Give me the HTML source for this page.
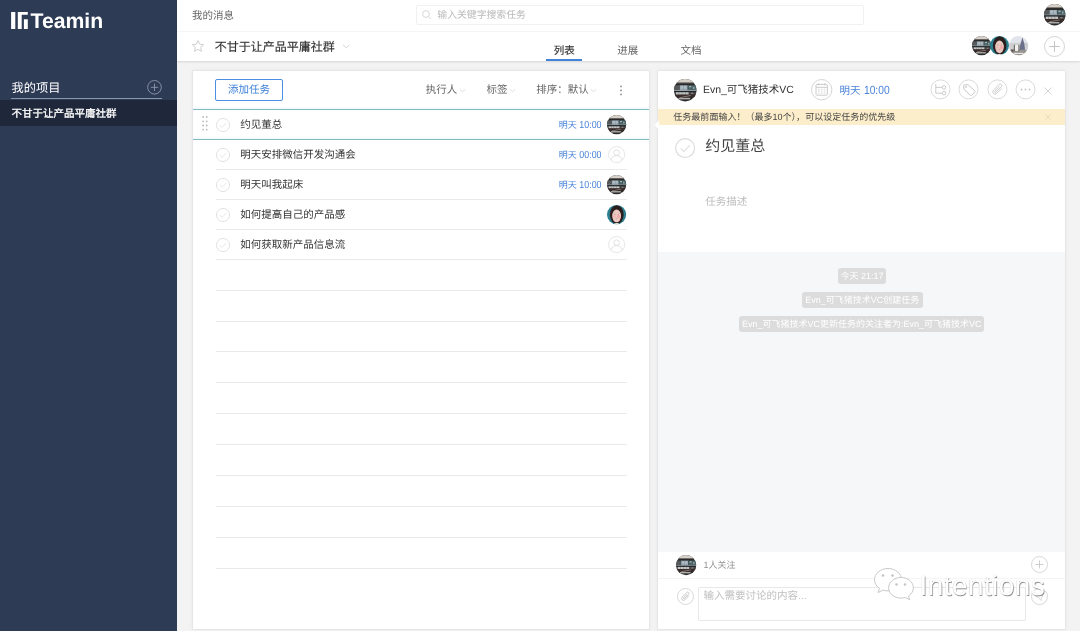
<!DOCTYPE html>
<html lang="zh-CN">
<head>
<meta charset="utf-8">
<title>Teamin</title>
<style>
*{box-sizing:border-box;margin:0;padding:0}
html,body{width:1080px;height:631px;overflow:hidden;background:#f3f3f4}
body{position:relative;will-change:transform;text-rendering:geometricPrecision;font-family:"Liberation Sans",sans-serif;color:#333;font-size:10.5px}
.a{position:absolute}
.t{position:absolute;white-space:nowrap;line-height:16px;height:16px}
svg{position:absolute;overflow:visible}
/* sidebar */
#side{left:0;top:0;width:177px;height:631px;background:#2e3b55}
#logo{left:30.6px;top:10.1px;font-size:21.2px;font-weight:bold;color:#fff;line-height:24px;height:24px;letter-spacing:0}
#proj{left:11.6px;top:80px;font-size:12.2px;color:#fff;font-weight:500}
#projline{left:11px;top:98px;width:151px;height:1px;background:#8a94aa}
#sel{left:0;top:99.5px;width:177px;height:26.5px;background:#1f283a}
#selt{left:11.5px;top:105.5px;font-size:10.5px;color:#fff;font-weight:500;-webkit-text-stroke:0.3px #fff}
/* header */
#hdr{left:177px;top:0;width:903px;height:60.5px;background:#fff;box-shadow:0 1px 2px rgba(0,0,0,.12)}
#hline{left:177px;top:31px;width:903px;height:1px;background:#f5f5f5}
#msg{left:192px;top:7.5px;color:#666}
#search{left:415.5px;top:5px;width:448px;height:20px;border:1px solid #f1f1f1;border-radius:2px;background:#fff}
#ph{left:437.3px;top:7.9px;font-size:9.85px;color:#b9b9b9}
#title{left:214.8px;top:38.5px;font-size:12px;color:#333;-webkit-text-stroke:0.15px #333}
.tab{top:42.5px;color:#666}
#tabline{left:546px;top:59.4px;width:36.2px;height:1.8px;background:#3f82da}
/* panels */
.panel{background:#fff;box-shadow:0 0 0 1px rgba(0,0,0,.028),0 0 4px 1px rgba(0,0,0,.045)}
#list{left:192.5px;top:70.5px;width:456px;height:558.5px}
#detail{left:658px;top:70.5px;width:407px;height:558.5px}
#addbtn{left:215px;top:79px;width:68px;height:22px;border:1px solid #4a8fe0;border-radius:2px;color:#3b7fd9;text-align:center;line-height:20px}
.flt{top:82px;color:#666}
.teal{left:192.5px;width:456px;height:1px;background:#84bbc2;box-shadow:0 -1px 2px rgba(120,210,230,.22)}
.rl{left:216px;width:410.5px;height:1px;background:#e9e9e9}
.task{left:240.3px;color:#333;margin-top:0.6px}
.due{font-size:9px;color:#4782d8;text-align:right;width:60px;left:541.4px;margin-top:0.5px}
.due span{display:inline-block;font-size:10.2px;transform:scaleX(.87);transform-origin:100% 50%;margin-left:-3.3px}
#banner{left:658px;top:109px;width:407px;height:15.5px;background:#fdeecb}
#bt{left:673.3px;top:108.7px;font-size:9px;color:#444;letter-spacing:0.02px}
#act{left:658px;top:252px;width:407px;height:300px;background:#f6f7f9}
.chip{background:#dcdcdc;color:#fff;font-size:9px;border-radius:3px;height:16px;line-height:16px;text-align:center;white-space:nowrap}
</style>
</head>
<body>
<!-- ===== sidebar ===== -->
<div id="side" class="a"></div>
<svg class="a" style="left:0;top:0" width="40" height="40"><path fill="#fff" d="M11.1 11.9h4.2v17h-4.2zM17.8 11.9h10v2.9h-6.1v14.1h-3.9zM23.9 19.2h3.9v9.7h-3.9z"/></svg>
<div id="logo" class="t">Teamin</div>
<div id="proj" class="t">我的项目</div>
<svg class="a" style="left:146px;top:79px" width="17" height="17"><circle cx="8.5" cy="8.3" r="6.8" fill="none" stroke="#8f99ae" stroke-width="0.9"/><path d="M8.5 4.6v7.4M4.8 8.3h7.4" stroke="#8f99ae" stroke-width="0.9" fill="none"/></svg>
<div id="projline" class="a"></div>
<div id="sel" class="a"></div>
<div id="selt" class="t">不甘于让产品平庸社群</div>

<!-- ===== header ===== -->
<div id="hdr" class="a"></div>
<div id="hline" class="a"></div>
<div id="msg" class="t">我的消息</div>
<div id="search" class="a"></div>
<svg class="a" style="left:420px;top:8px" width="14" height="14"><circle cx="6" cy="6" r="3.4" fill="none" stroke="#d2d2d2" stroke-width="0.9"/><path d="M8.5 8.6l2.3 2.4" stroke="#d2d2d2" stroke-width="0.9"/></svg>
<div id="ph" class="t">输入关键字搜索任务</div>

<svg class="a" style="left:191px;top:39px" width="15" height="15"><path d="M7 1.6l1.7 3.6 3.9.5-2.9 2.7.8 3.9L7 10.4l-3.5 1.9.8-3.9L1.4 5.7l3.9-.5z" fill="none" stroke="#c9c9c9" stroke-width="0.9" stroke-linejoin="round"/></svg>
<div id="title" class="t">不甘于让产品平庸社群</div>
<svg class="a" style="left:342px;top:43px" width="9" height="7"><path d="M1 1.8l3.2 3 3.2-3" fill="none" stroke="#cfcfcf" stroke-width="0.9"/></svg>
<div class="t tab" style="left:553.8px;color:#333;-webkit-text-stroke:0.15px #333">列表</div>
<div class="t tab" style="left:617.3px">进展</div>
<div class="t tab" style="left:680.4px">文档</div>
<div id="tabline" class="a"></div>

<!-- ===== panels ===== -->
<div id="list" class="a panel"></div>
<div id="detail" class="a panel"></div>

<svg class="a" width="0" height="0" style="left:0;top:0"><defs>
<clipPath id="cc"><circle cx="50" cy="50" r="50"/></clipPath>
<symbol id="av1" viewBox="0 0 100 100"><g clip-path="url(#cc)"><g>
<rect x="-40" y="-40" width="180" height="180" fill="#2a2a2b"/>
<rect x="-40" y="-40" width="180" height="56" fill="#d6d0c9"/>
<rect x="-40" y="16" width="180" height="3" fill="#8d8782"/>
<rect x="-10" y="28" width="34" height="23" fill="#55595a"/>
<rect x="24" y="28" width="38" height="23" fill="#98a8b2"/>
<rect x="30" y="31" width="26" height="12" fill="#aebbc3"/>
<rect x="62" y="28" width="48" height="23" fill="#4f686b"/>
<rect x="68" y="31" width="10" height="6" fill="#a9b7b7"/><rect x="84" y="35" width="7" height="10" fill="#8fa3a3"/>
<rect x="23" y="28" width="2.500" height="23" fill="#3d4a50"/><rect x="43" y="28" width="1.500" height="23" fill="#6f7f88"/><rect x="61" y="28" width="2.500" height="23" fill="#34444a"/><rect x="79" y="28" width="2" height="23" fill="#3a4d50"/>
<rect x="-10" y="50" width="120" height="3.500" fill="#b4b4b0"/>
<rect x="-10" y="53.500" width="120" height="5" fill="#182630"/>
<rect x="8" y="59" width="58" height="11" fill="#c6c6c4"/>
<rect x="21" y="59" width="2" height="11" fill="#6a6a6a"/><rect x="35" y="59" width="2" height="11" fill="#6a6a6a"/><rect x="50" y="59" width="2" height="11" fill="#6a6a6a"/>
<rect x="66" y="59" width="44" height="11" fill="#4b4545"/>
<rect x="76" y="61" width="10" height="6" fill="#8a8683"/>
<rect x="-10" y="70" width="120" height="12" fill="#382b29"/>
<path d="M26 81L74 72v4L26 85z" fill="#8b7d77"/>
<rect x="20" y="84" width="52" height="7" fill="#adadab"/>
</g></g></symbol>
<symbol id="av2" viewBox="0 0 100 100"><g clip-path="url(#cc)"><g>
<rect x="-40" y="-40" width="180" height="180" fill="#2c7f90"/>
<ellipse cx="51" cy="50" rx="36" ry="49" fill="#2b1e1d"/>
<path d="M22 112 Q50 76 80 112z" fill="#f3efe9"/>
<ellipse cx="50" cy="57" rx="23" ry="33" fill="#ebc9c1"/>
<ellipse cx="61" cy="60" rx="9" ry="9" fill="#f1a9a9"/>
<ellipse cx="39" cy="61" rx="7" ry="7" fill="#efb7b3"/>
<ellipse cx="41" cy="47" rx="4" ry="2" fill="#96726c"/><ellipse cx="59" cy="47" rx="4" ry="2" fill="#96726c"/>
<ellipse cx="50" cy="72" rx="6" ry="1.800" fill="#c98a86"/>
</g></g></symbol>
<symbol id="av3" viewBox="0 0 100 100"><g clip-path="url(#cc)"><g>
<rect x="-40" y="-40" width="180" height="180" fill="#e2e4ec"/>
<rect x="-10" y="36" width="120" height="40" fill="#cfcfd2"/>
<path d="M70 8 L80 40 L84 78 L54 78 L60 40z" fill="#6b708a"/>
<rect x="-40" y="72" width="180" height="70" fill="#9a9590"/>
<ellipse cx="40" cy="62" rx="12" ry="16" fill="#efefee"/>
<path d="M28 45 v35 M52 45 v35" stroke="#6f6a68" stroke-width="6"/>
<ellipse cx="18" cy="76" rx="9" ry="7" fill="#6a625e"/>
<rect x="25" y="88" width="50" height="6" fill="#e8e8e8"/>
</g></g></symbol>
<symbol id="avp" viewBox="0 0 20 20"><circle cx="10" cy="10" r="8.4" fill="#fff" stroke="#e2e2e2" stroke-width="0.9"/><circle cx="10" cy="8" r="2.9" fill="none" stroke="#dcdcdc" stroke-width="0.9"/><path d="M4.3 15.6c.6-3 2.8-4.6 5.7-4.6s5.100 1.600 5.700 4.600" fill="none" stroke="#dcdcdc" stroke-width="0.9"/></symbol>
<symbol id="chk" viewBox="0 0 20 20"><circle cx="10" cy="10" r="9.4" fill="#fff" stroke="#dedede" stroke-width="1.25"/><path d="M5.600 10.300l3.200 3.100 5.800-6.200" fill="none" stroke="#e4e4e4" stroke-width="1.300"/></symbol>
<symbol id="chev" viewBox="0 0 8 6"><path d="M1 1.500l3 2.800 3-2.800" fill="none" stroke="#d4d4d4" stroke-width="0.9"/></symbol>
</defs></svg>
<!-- header avatars -->
<svg class="a" style="left:1044.4px;top:4.4px" width="21.400" height="21.400"><use href="#av1"/></svg>
<svg class="a" style="left:972px;top:36.200px" width="19.200" height="19.200"><use href="#av1"/></svg>
<svg class="a" style="left:990px;top:36.200px" width="19" height="19"><use href="#av2"/></svg>
<svg class="a" style="left:1008.8px;top:36.200px" width="19.200" height="19.200"><use href="#av3"/></svg>
<svg class="a" style="left:1043.900px;top:35.500px" width="21" height="21"><circle cx="10.500" cy="10.500" r="10" fill="#fff" stroke="#cfcfcf" stroke-width="0.9"/><path d="M10.500 5.200v10.600M5.200 10.500h10.600" stroke="#bdbdbd" stroke-width="0.9"/></svg>

<!-- list -->
<div id="addbtn" class="a">添加任务</div>
<div class="t flt" style="left:425.700px">执行人</div><svg class="a" style="left:459.300px;top:88px" width="7" height="5.250"><use href="#chev"/></svg>
<div class="t flt" style="left:486.400px">标签</div><svg class="a" style="left:508.500px;top:88px" width="7" height="5.250"><use href="#chev"/></svg>
<div class="t flt" style="left:536.200px">排序：默认</div><svg class="a" style="left:590px;top:88px" width="7" height="5.250"><use href="#chev"/></svg>
<svg class="a" style="left:618.600px;top:84px" width="4" height="13"><circle cx="2" cy="2.400" r="0.9" fill="#8c8c8c"/><circle cx="2" cy="6.400" r="0.9" fill="#8c8c8c"/><circle cx="2" cy="10.400" r="0.9" fill="#8c8c8c"/></svg>
<div class="a teal" style="top:108.800px"></div><div class="a teal" style="top:138.900px"></div>
<svg class="a" style="left:202px;top:116px" width="6" height="15"><circle cx="1.1" cy="1" r="0.900" fill="#b8b8b8"/><circle cx="1.1" cy="5.3" r="0.900" fill="#b8b8b8"/><circle cx="1.1" cy="9.5" r="0.900" fill="#b8b8b8"/><circle cx="1.1" cy="13.6" r="0.900" fill="#b8b8b8"/><circle cx="4.7" cy="1" r="0.900" fill="#b8b8b8"/><circle cx="4.7" cy="5.3" r="0.900" fill="#b8b8b8"/><circle cx="4.7" cy="9.5" r="0.900" fill="#b8b8b8"/><circle cx="4.7" cy="13.6" r="0.900" fill="#b8b8b8"/></svg>
<svg class="a" style="left:215.9px;top:117.80px" width="14" height="14"><use href="#chk"/></svg>
<div class="t task" style="top:116.40px">约见董总</div>
<div class="t due" style="top:116.40px">明天 <span>10:00</span></div>
<svg class="a" style="left:607.40px;top:114.80px" width="19.2" height="19.2"><use href="#av1"/></svg>
<svg class="a" style="left:215.9px;top:147.85px" width="14" height="14"><use href="#chk"/></svg>
<div class="t task" style="top:146.45px">明天安排微信开发沟通会</div>
<div class="t due" style="top:146.45px">明天 <span>00:00</span></div>
<svg class="a" style="left:607.40px;top:144.85px" width="19.2" height="19.2"><use href="#avp"/></svg>
<svg class="a" style="left:215.9px;top:177.90px" width="14" height="14"><use href="#chk"/></svg>
<div class="t task" style="top:176.50px">明天叫我起床</div>
<div class="t due" style="top:176.50px">明天 <span>10:00</span></div>
<svg class="a" style="left:607.40px;top:174.90px" width="19.2" height="19.2"><use href="#av1"/></svg>
<svg class="a" style="left:215.9px;top:207.95px" width="14" height="14"><use href="#chk"/></svg>
<div class="t task" style="top:206.55px">如何提高自己的产品感</div>
<svg class="a" style="left:607.40px;top:204.95px" width="19.2" height="19.2"><use href="#av2"/></svg>
<svg class="a" style="left:215.9px;top:238.00px" width="14" height="14"><use href="#chk"/></svg>
<div class="t task" style="top:236.60px">如何获取新产品信息流</div>
<svg class="a" style="left:607.40px;top:235.00px" width="19.2" height="19.2"><use href="#avp"/></svg>
<div class="a rl" style="top:168.70px"></div>
<div class="a rl" style="top:198.80px"></div>
<div class="a rl" style="top:228.80px"></div>
<div class="a rl" style="top:258.70px"></div>
<div class="a rl" style="top:289.60px"></div>
<div class="a rl" style="top:320.50px"></div>
<div class="a rl" style="top:351.40px"></div>
<div class="a rl" style="top:382.30px"></div>
<div class="a rl" style="top:413.20px"></div>
<div class="a rl" style="top:444.10px"></div>
<div class="a rl" style="top:475.00px"></div>
<div class="a rl" style="top:505.90px"></div>
<div class="a rl" style="top:536.80px"></div>
<div class="a rl" style="top:567.70px"></div>

<!-- detail -->
<svg class="a" style="left:674.200px;top:78.600px" width="22.400" height="22.400"><use href="#av1"/></svg>
<div class="t" style="left:702.900px;top:82px;color:#333">Evn_可飞猪技术VC</div>
<svg class="a" style="left:811px;top:79.300px" width="21.400" height="21.400"><circle cx="10.700" cy="10.700" r="10.200" fill="#fff" stroke="#d0d0d0" stroke-width="0.9"/>
<rect x="5" y="5.400" width="11.400" height="10.800" rx="1" fill="none" stroke="#c2c2c2" stroke-width="0.850"/><path d="M5 8.300h11.400M7.600 4.300v2.100M13.800 4.300v2.100" stroke="#c2c2c2" stroke-width="0.850"/>
<path d="M7 10.300h1.600M9.900 10.300h1.600M12.800 10.300h1.600M7 12.200h1.600M9.900 12.200h1.600M12.800 12.200h1.600M7 14.100h1.600M9.900 14.100h1.600M12.800 14.100h1.600" stroke="#cfcfcf" stroke-width="0.800"/></svg>
<div class="t" style="left:839.600px;top:82.400px;color:#4782d8">明天 <span style="display:inline-block;font-size:11.900px;transform:scaleX(.86);transform-origin:0 50%">10:00</span></div>
<svg class="a" style="left:929.5px;top:79.300px" width="21" height="21"><circle cx="10.500" cy="10.400" r="9.500" fill="#fff" stroke="#d6d6d6" stroke-width="0.9"/><path d="M5.800 4.900v9.300h6.300M5.800 8.400h6.300" fill="none" stroke="#c6c6c6" stroke-width="0.9"/><circle cx="14" cy="8.400" r="1.800" fill="#fff" stroke="#c6c6c6" stroke-width="0.9"/><circle cx="14" cy="14.200" r="1.800" fill="#fff" stroke="#c6c6c6" stroke-width="0.9"/></svg>
<svg class="a" style="left:958.0px;top:79.300px" width="21" height="21"><circle cx="10.500" cy="10.400" r="9.500" fill="#fff" stroke="#d6d6d6" stroke-width="0.9"/><g transform="translate(10.700 10.500) rotate(42)"><path d="M-3.600 -3.100H5.600a.6.6 0 0 1 .6.6V2.500a.6.6 0 0 1-.6.6H-3.600L-6.400 .5a.7.7 0 0 1 0-1z" fill="none" stroke="#c6c6c6" stroke-width="0.9" stroke-linejoin="round"/><circle cx="-3.700" cy="0" r="0.800" fill="none" stroke="#c6c6c6" stroke-width="0.700"/></g></svg>
<svg class="a" style="left:986.7px;top:79.300px" width="21" height="21"><circle cx="10.500" cy="10.400" r="9.500" fill="#fff" stroke="#d6d6d6" stroke-width="0.9"/><g transform="translate(10.500 10.400) rotate(45)"><path d="M2.300 -3.200v6.600a2.300 2.300 0 0 1-4.600 0V-4.600a1.600 1.600 0 0 1 3.200 0v7.600a.75.75 0 0 1-1.500 0V-3" fill="none" stroke="#c4c4c4" stroke-width="0.800" stroke-linecap="round"/></g></svg>
<svg class="a" style="left:1015.3px;top:79.300px" width="21" height="21"><circle cx="10.500" cy="10.400" r="9.500" fill="#fff" stroke="#d6d6d6" stroke-width="0.9"/><circle cx="6.500" cy="10.500" r="0.900" fill="#c2c2c2"/><circle cx="10.500" cy="10.500" r="0.900" fill="#c2c2c2"/><circle cx="14.500" cy="10.500" r="0.900" fill="#c2c2c2"/></svg>
<svg class="a" style="left:1043.500px;top:86.500px" width="8" height="8"><path d="M0.500 0.500l7 7M7.500 0.500l-7 7" stroke="#d0d0d0" stroke-width="0.9"/></svg>
<div id="banner" class="a"></div>
<div id="bt" class="t">任务最前面输入！（最多10个），可以设定任务的优先级</div>
<svg class="a" style="left:1045px;top:114px" width="6" height="6"><path d="M0.300 0.300l5.400 5.400M5.700 0.300l-5.400 5.400" stroke="#e6d9b9" stroke-width="0.9"/></svg>
<svg class="a" style="left:654px;top:120px" width="5" height="10"><path d="M5 0L0.800 5 5 10z" fill="#fff"/></svg>
<svg class="a" style="left:675.100px;top:137.600px" width="20.200" height="20.200"><use href="#chk"/></svg>
<div class="t" style="left:705.300px;top:137.300px;font-size:15px;line-height:20px;height:20px;color:#444">约见董总</div>
<div class="t" style="left:705.300px;top:193.700px;color:#bdbdbd">任务描述</div>
<div id="act" class="a"></div>
<div class="a chip" style="left:837.800px;top:267.500px;width:48.400px">今天 21:17</div>
<div class="a chip" style="left:801.600px;top:292.200px;width:121.200px">Evn_可飞猪技术VC创建任务</div>
<div class="a chip" style="left:739.100px;top:315.700px;width:245.300px">Evn_可飞猪技术VC更新任务的关注者为:Evn_可飞猪技术VC</div>
<svg class="a" style="left:675.500px;top:554.700px" width="20.200" height="20.200"><use href="#av1"/></svg>
<div class="t" style="left:703.400px;top:557px;font-size:9px;color:#939393">1人关注</div>
<svg class="a" style="left:1030.700px;top:555.900px" width="17" height="17"><circle cx="8.500" cy="8.500" r="8" fill="#fff" stroke="#d2d2d2" stroke-width="0.9"/><path d="M8.500 4.500v8M4.500 8.500h8" stroke="#c8c8c8" stroke-width="0.9"/></svg>
<div class="a" style="left:658px;top:578.100px;width:407px;height:1px;background:#f4f4f4"></div>
<svg class="a" style="left:676.700px;top:587.900px" width="17" height="17"><circle cx="8.500" cy="8.500" r="8" fill="#fff" stroke="#d2d2d2" stroke-width="0.9"/><g transform="translate(8.500 8.500) rotate(45)"><path d="M1.900 -2.600v5.400a1.900 1.900 0 0 1-3.800 0V-3.800a1.300 1.300 0 0 1 2.600 0v6.200a.6.6 0 0 1-1.200 0V-2.400" fill="none" stroke="#bebebe" stroke-width="0.750" stroke-linecap="round"/></g></svg>
<div class="a" style="left:698.300px;top:586.800px;width:327.700px;height:34.400px;border:1px solid #e8e8e8;border-radius:2px;background:#fff"></div>
<div class="t" style="left:703.400px;top:588.300px;font-size:10.500px;color:#c0c0c0">输入需要讨论的内容...</div>
<svg class="a" style="left:1030.900px;top:588px" width="17" height="17"><circle cx="8.500" cy="8.500" r="8" fill="#fff" stroke="#d2d2d2" stroke-width="0.9"/><path d="M4.800 8.200l7.600-3.200-2.600 7.400-1.700-2.700z" fill="none" stroke="#c8c8c8" stroke-width="0.700" stroke-linejoin="round"/></svg>
<svg class="a" style="left:872px;top:565px" width="46" height="38"><g fill="#fff" stroke="#c9c9c9" stroke-width="1">
<path d="M16 3.500c-7.500 0-13.500 5-13.500 11.200 0 3.500 1.900 6.600 5 8.700l-1.400 4.200 4.800-2.500c1.600.5 3.300.8 5.100.8 7.500 0 13.500-5 13.500-11.200S23.500 3.500 16 3.500z"/>
<path d="M29 12.500c-6.900 0-12.400 4.600-12.400 10.300S22.100 33.100 29 33.100c1.500 0 3-.2 4.300-.6l4.400 2.300-1.200-3.800c2.900-1.900 4.900-4.800 4.900-8.200 0-5.700-5.500-10.300-12.400-10.300z"/></g>
<g fill="#c4c4c4"><circle cx="11" cy="10.500" r="1.300"/><circle cx="20.500" cy="10.500" r="1.300"/><circle cx="24.500" cy="19.500" r="1.200"/><circle cx="33" cy="19.500" r="1.200"/></g></svg>
<div class="t" style="left:919.500px;top:569px;font-size:28px;line-height:34px;height:34px;color:#fff;text-shadow:0.700px 0.700px 0.700px #8a8a8a,-0.300px -0.300px 0.600px #d8d8d8;letter-spacing:0.420px">Intentions</div>

</body>
</html>
